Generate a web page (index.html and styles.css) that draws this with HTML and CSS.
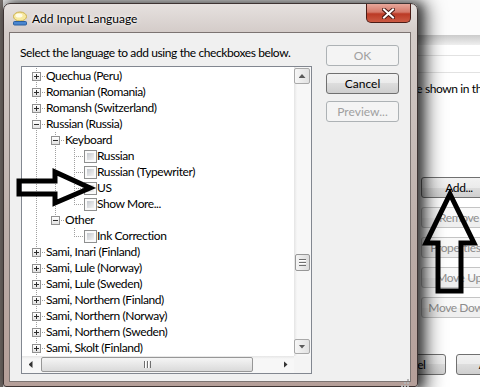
FILE: index.html
```html
<!DOCTYPE html>
<html lang="en">
<head>
    <meta charset="UTF-8">
    <title>Add Input Language</title>
    <link rel="stylesheet" href="styles.css">
</head>
<body>

<div class="desk">

    <!-- window behind the dialog -->
    <div class="bw">
        <div class="bw-head"></div>
        <div class="bw-band"></div>
        <div class="bw-line"></div>
        <div class="bw-line tall"></div>
        <div class="bw-text">be shown in the list</div>
        <div class="bw-btns">
            <div class="bw-btn on">Add...</div>
            <div class="bw-btn">Remove</div>
            <div class="bw-btn">Properties...</div>
            <div class="bw-btn">Move Up</div>
            <div class="bw-btn">Move Down</div>
        </div>
        <div class="bw-foot">
            <div class="bw-btn on">Cancel</div>
            <div class="bw-btn on">Apply</div>
        </div>
    </div>

    <div class="dialog">
        <div class="titlebar">
            <svg class="ticon" viewBox="0 0 16 16">
                <ellipse cx="8" cy="6.5" rx="6.5" ry="4.5" fill="#f7e9a0" stroke="#cdb04a"/>
                <ellipse cx="7" cy="5.5" rx="3.5" ry="2" fill="#fffbe6"/>
                <rect x="1.5" y="11.5" width="13" height="3.5" rx="1" fill="#4a86d0" stroke="#2b5e9e"/>
            </svg>
            <span class="title">Add Input Language</span>
            <span class="close">
                <svg width="13" height="11" viewBox="0 0 13 11">
                    <path d="M2 1.5 L11 9.5 M11 1.5 L2 9.5" stroke="#4a1a14" stroke-width="4" stroke-linecap="square"/>
                    <path d="M2 1.5 L11 9.5 M11 1.5 L2 9.5" stroke="#fff" stroke-width="2" stroke-linecap="square"/>
                </svg>
            </span>
        </div>

        <div class="client">
            <div class="left">
                <p class="hint">Select the language to add using the checkboxes below.</p>
                <div class="tree">
                    <div class="list">
                        <div class="row"><span class="c tee"><i class="pm plus"></i></span><span class="t">Quechua (Peru)</span></div>
                        <div class="row"><span class="c tee"><i class="pm plus"></i></span><span class="t">Romanian (Romania)</span></div>
                        <div class="row"><span class="c tee"><i class="pm plus"></i></span><span class="t">Romansh (Switzerland)</span></div>
                        <div class="row"><span class="c tee"><i class="pm"></i></span><span class="t">Russian (Russia)</span></div>
                        <div class="row"><span class="c pipe"></span><span class="c tee"><i class="pm"></i></span><span class="t">Keyboard</span></div>
                        <div class="row"><span class="c pipe"></span><span class="c pipe"></span><span class="c tee"></span><i class="cb"></i><span class="t">Russian</span></div>
                        <div class="row"><span class="c pipe"></span><span class="c pipe"></span><span class="c tee"></span><i class="cb"></i><span class="t">Russian (Typewriter)</span></div>
                        <div class="row"><span class="c pipe"></span><span class="c pipe"></span><span class="c tee"></span><i class="cb"></i><span class="t">US</span></div>
                        <div class="row"><span class="c pipe"></span><span class="c pipe"></span><span class="c elbow"></span><i class="cb"></i><span class="t">Show More...</span></div>
                        <div class="row"><span class="c pipe"></span><span class="c elbow"><i class="pm"></i></span><span class="t">Other</span></div>
                        <div class="row"><span class="c pipe"></span><span class="c"></span><span class="c elbow"></span><i class="cb"></i><span class="t">Ink Correction</span></div>
                        <div class="row"><span class="c tee"><i class="pm plus"></i></span><span class="t">Sami, Inari (Finland)</span></div>
                        <div class="row"><span class="c tee"><i class="pm plus"></i></span><span class="t">Sami, Lule (Norway)</span></div>
                        <div class="row"><span class="c tee"><i class="pm plus"></i></span><span class="t">Sami, Lule (Sweden)</span></div>
                        <div class="row"><span class="c tee"><i class="pm plus"></i></span><span class="t">Sami, Northern (Finland)</span></div>
                        <div class="row"><span class="c tee"><i class="pm plus"></i></span><span class="t">Sami, Northern (Norway)</span></div>
                        <div class="row"><span class="c tee"><i class="pm plus"></i></span><span class="t">Sami, Northern (Sweden)</span></div>
                        <div class="row"><span class="c tee"><i class="pm plus"></i></span><span class="t">Sami, Skolt (Finland)</span></div>
                    </div>
                    <div class="vbar">
                        <span class="sb-btn up"><i class="tri tri-up"></i></span>
                        <span class="vthumb"><i class="grip-h"></i></span>
                        <span class="sb-btn down"><i class="tri tri-down"></i></span>
                    </div>
                    <div class="hbar">
                        <span class="harrow"><i class="tri tri-left"></i></span>
                        <span class="hthumb"><i class="grip-v"></i></span>
                        <span class="harrow"><i class="tri tri-right"></i></span>
                    </div>
                    <div class="corner"></div>
                </div>
            </div>

            <div class="side">
                <button class="btn" disabled>OK</button>
                <button class="btn def">Cancel</button>
                <button class="btn" disabled>Preview...</button>
                <svg class="grip" width="10" height="10" viewBox="0 0 10 10">
                    <rect x="7" y="1" width="2" height="2" fill="#b5b5b5"/>
                    <rect x="4" y="4" width="2" height="2" fill="#b5b5b5"/>
                    <rect x="7" y="4" width="2" height="2" fill="#b5b5b5"/>
                    <rect x="1" y="7" width="2" height="2" fill="#b5b5b5"/>
                    <rect x="4" y="7" width="2" height="2" fill="#b5b5b5"/>
                    <rect x="7" y="7" width="2" height="2" fill="#b5b5b5"/>
                </svg>
            </div>
        </div>
    </div>

    <!-- hand drawn arrows over the screenshot -->
    <svg class="marks" width="480" height="387" viewBox="0 0 480 387">
        <polygon points="19,181 55,181 55,172 90,188 55,203 55,194 19,194" fill="none" stroke="#000" stroke-width="5"/>
        <polygon points="450,194 474,243 461,243 461,291 438,291 438,243 426,243" fill="none" stroke="#000" stroke-width="5"/>
    </svg>
</div>

</body>
</html>
```

FILE: styles.css
```css
body {
    margin: 0;
    font-family: Lato, "Noto Sans", sans-serif;
    font-size: 12px;
    letter-spacing: -0.4px;
    color: #000;
}

.desk {
    position: relative;
    width: 480px;
    height: 387px;
    overflow: hidden;
    background: linear-gradient(to right, #857d79 0 3px, #fbfbfb 3px);
}

/* window in the back */
.bw {
    position: absolute;
    left: 330px;
    top: 0;
    width: 200px;
    height: 387px;
    background: #fff;
    display: flex;
    flex-direction: column;
}

.bw-head {
    height: 35px;
    background: #fcfcfc;
}

.bw-band {
    height: 10px;
    background: linear-gradient(#cbcbcb, #efefef);
}

.bw-line {
    height: 10px;
    border-bottom: 1px solid #e2e2e2;
}

.bw-line.tall {
    height: 16px;
}

.bw-text {
    margin: 8px 0 0 80px;
    line-height: 15px;
    white-space: nowrap;
}

.bw-btns {
    margin: 81px 0 0 91px;
    display: flex;
    flex-direction: column;
    gap: 9px;
}

.bw-btn {
    width: 76px;
    height: 21px;
    box-sizing: border-box;
    border: 1px solid #c4c4c4;
    border-radius: 3px;
    background: linear-gradient(#f9f9f9 50%, #efefef 50%);
    color: #8d8d8d;
    text-align: center;
    line-height: 19px;
    white-space: nowrap;
}

.bw-btn.on {
    color: #000;
    border-color: #707070;
    background: linear-gradient(#f2f2f2, #ebebeb 50%, #dddddd 50%, #cfcfcf);
}

.bw-foot {
    margin-top: auto;
    margin-bottom: 12px;
    padding-left: 42px;
    display: flex;
    gap: 10px;
}

.bw-foot .bw-btn {
    width: 75px;
}

/* dialog */
.dialog {
    position: absolute;
    left: 3px;
    top: 3px;
    width: 415px;
    height: 384px;
    box-sizing: border-box;
    border: 1px solid #3e3433;
    border-radius: 7px 7px 3px 3px;
    padding: 0 6px 4px 5px;
    background: linear-gradient(#e6e1df, #d4ccc9 28px, #bcaea9 60%, #b59f99);
    box-shadow: 5px 0 9px rgba(0, 0, 0, 0.45), 4px 2px 18px 6px rgba(0, 0, 0, 0.55);
    display: flex;
    flex-direction: column;
}

.titlebar {
    height: 28px;
    flex: none;
    display: flex;
    align-items: center;
    padding-left: 3px;
}

.ticon {
    width: 16px;
    height: 16px;
    margin-right: 4px;
}

.title {
    letter-spacing: 0;
    text-shadow: 0 0 6px #fff, 0 0 3px #fff;
}

.close {
    margin-left: auto;
    align-self: flex-start;
    width: 45px;
    height: 19px;
    box-sizing: border-box;
    border: 1px solid #4b1c16;
    border-top: none;
    border-radius: 0 0 5px 5px;
    background: linear-gradient(#e7a79b, #d57a6a 45%, #bb3a25 55%, #cc5a43);
    display: flex;
    align-items: center;
    justify-content: center;
}

.client {
    flex: 1;
    border: 1px solid #7c7472;
    background: #f0f0f0;
    display: grid;
    grid-template-columns: 292px 84px;
    column-gap: 14px;
    align-items: start;
    padding: 12px 0 0 10px;
}

.hint {
    margin: 0;
    line-height: 15px;
    white-space: nowrap;
}

/* tree view */
.tree {
    width: 291px;
    height: 308px;
    margin: 6px 0 0 1px;
    box-sizing: border-box;
    border: 1px solid #828790;
    background: #fff;
    display: grid;
    grid-template-columns: 1fr 17px;
    grid-template-rows: 1fr 17px;
}

.list {
    overflow: hidden;
    padding: 1px 0 0 5px;
}

.row {
    height: 16px;
    display: flex;
    align-items: center;
    white-space: nowrap;
}

.t {
    line-height: 16px;
}

.c {
    width: 19px;
    height: 16px;
    flex: none;
    display: flex;
    align-items: center;
}

.pipe {
    background: repeating-linear-gradient(#a0a0a0 0 1px, transparent 1px 2px) 9px 0 / 1px 16px no-repeat;
}

.tee {
    background:
        repeating-linear-gradient(#a0a0a0 0 1px, transparent 1px 2px) 9px 0 / 1px 16px no-repeat,
        repeating-linear-gradient(to right, #a0a0a0 0 1px, transparent 1px 2px) 11px 8px / 8px 1px no-repeat;
}

.elbow {
    background:
        repeating-linear-gradient(#a0a0a0 0 1px, transparent 1px 2px) 9px 0 / 1px 9px no-repeat,
        repeating-linear-gradient(to right, #a0a0a0 0 1px, transparent 1px 2px) 11px 8px / 8px 1px no-repeat;
}

.pm {
    width: 9px;
    height: 9px;
    box-sizing: border-box;
    margin-left: 5px;
    border: 1px solid #919191;
    background:
        linear-gradient(#2d2d2d, #2d2d2d) center / 5px 1px no-repeat,
        linear-gradient(#fff, #e2e2e2);
}

.pm.plus {
    background:
        linear-gradient(#2d2d2d, #2d2d2d) center / 5px 1px no-repeat,
        linear-gradient(#2d2d2d, #2d2d2d) center / 1px 5px no-repeat,
        linear-gradient(#fff, #e2e2e2);
}

.cb {
    width: 13px;
    height: 13px;
    flex: none;
    box-sizing: border-box;
    border: 1px solid #8e8f8f;
    background:
        linear-gradient(135deg, #c4c8ce, #f4f4f4) 2px 2px / 7px 7px no-repeat,
        #fafafa;
}

/* scrollbars */
.vbar {
    display: flex;
    flex-direction: column;
    background: linear-gradient(to right, #e4e4e4, #f7f7f7 3px);
}

.sb-btn {
    height: 16px;
    margin: 1px 1px 0 0;
    box-sizing: border-box;
    border: 1px solid #a9a9a9;
    border-radius: 2px;
    background: linear-gradient(to right, #f6f6f6, #e2e2e2);
    display: flex;
    align-items: center;
    justify-content: center;
}

.sb-btn.down {
    height: 15px;
    margin: auto 1px 2px 0;
}

.vthumb {
    height: 17px;
    margin: 170px 1px 0 1px;
    box-sizing: border-box;
    border: 1px solid #979797;
    border-radius: 2px;
    background: linear-gradient(to right, #f4f4f4, #dcdcdc);
    display: flex;
    align-items: center;
    justify-content: center;
}

.grip-h {
    width: 7px;
    height: 7px;
    background: repeating-linear-gradient(#6f6f6f 0 1px, #fff 1px 2px, transparent 2px 3px);
}

.hbar {
    display: flex;
    align-items: center;
    background: linear-gradient(#e6e6e6, #f7f7f7 3px);
}

.harrow {
    width: 17px;
    height: 17px;
    flex: none;
    display: flex;
    align-items: center;
    justify-content: center;
}

.hthumb {
    width: 212px;
    height: 15px;
    margin: 0 auto 0 2px;
    box-sizing: border-box;
    border: 1px solid #979797;
    border-radius: 2px;
    background: linear-gradient(#f5f5f5, #dadada);
    display: flex;
    align-items: center;
    justify-content: center;
}

.grip-v {
    width: 7px;
    height: 7px;
    background: repeating-linear-gradient(to right, #6f6f6f 0 1px, #fff 1px 2px, transparent 2px 3px);
}

.corner {
    background: #f4f4f4;
}

.tri {
    background: #5a5a5a;
}

.tri-up {
    width: 7px;
    height: 4px;
    clip-path: polygon(50% 0, 100% 100%, 0 100%);
}

.tri-down {
    width: 7px;
    height: 4px;
    clip-path: polygon(0 0, 100% 0, 50% 100%);
}

.tri-left {
    width: 4px;
    height: 7px;
    background: #333;
    clip-path: polygon(100% 0, 100% 100%, 0 50%);
}

.tri-right {
    width: 4px;
    height: 7px;
    background: #333;
    clip-path: polygon(0 0, 100% 50%, 0 100%);
}

/* buttons */
.side {
    align-self: stretch;
    display: flex;
    flex-direction: column;
    gap: 7px;
}

.btn {
    width: 73px;
    height: 21px;
    box-sizing: border-box;
    padding: 0;
    font: inherit;
    border: 1px solid #adb2b5;
    border-radius: 3px;
    background: #f4f4f4;
    color: #a0a0a0;
}

.btn.def {
    color: #000;
    border-color: #707070;
    background: linear-gradient(#f2f2f2, #ebebeb 50%, #dddddd 50%, #cfcfcf);
}

.grip {
    margin: auto 0 -7px;
    align-self: flex-end;
}

.marks {
    position: absolute;
    left: 0;
    top: 0;
    pointer-events: none;
}
```
